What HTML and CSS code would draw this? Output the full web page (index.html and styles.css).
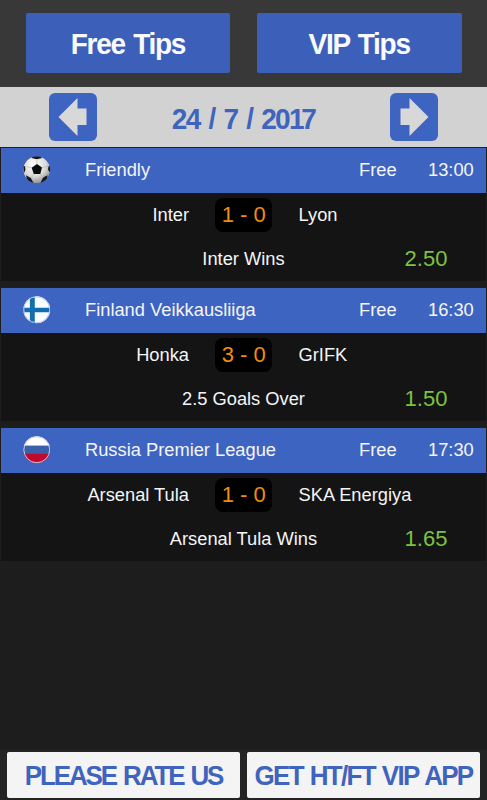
FILE: index.html
```html
<!DOCTYPE html>
<html lang="en">
<head>
<meta charset="utf-8">
<title>Betting Tips</title>
<link rel="stylesheet" href="styles.css">
</head>
<body>
<nav class="tabs">
  <button class="tab"><span class="tall">Free Tips</span></button>
  <button class="tab"><span class="tall">VIP Tips</span></button>
</nav>
<div class="datebar">
  <button class="arrow" aria-label="Previous day"><svg viewBox="0 0 48 48"><path d="M9.500 24 28.500 5V15.500H37.500V32H28.500V43Z"/></svg></button>
  <span class="date tall">24 / 7 / 20<span class="tight">1</span>7</span>
  <button class="arrow" aria-label="Next day"><svg viewBox="0 0 48 48"><path d="M38.500 24 19.500 5V15.500H10.500V32H19.500V43Z"/></svg></button>
</div>
<main class="list">
  <article class="card">
    <header class="league">
      <svg class="badge" viewBox="0 0 28 28">
        <defs>
          <radialGradient id="shade" cx=".4" cy=".3" r=".75"><stop offset="0" stop-color="#fff"/><stop offset=".6" stop-color="#d9d9d6"/><stop offset="1" stop-color="#85878a"/></radialGradient>
          <clipPath id="round"><circle cx="14" cy="14" r="13.700"/></clipPath>
        </defs>
        <g clip-path="url(#round)">
          <circle cx="14" cy="14" r="13.700" fill="url(#shade)"/>
          <path d="M14.200 8.200 19.300 11.800 17.600 18.300H11L8.800 12Z" fill="#090a0c"/>
          <path d="M8.500 2 14 3.300 19.500 2 17 0H11ZM0 10 2 10.500 2.500 14 1 17.500ZM28 10 26 10.500 25.500 14 28 17.500ZM3 19.500 8 22.500 11 28 5 27ZM25 19.500 20.500 22 17.500 28 24 27Z" fill="#15171b"/>
          <path d="M14.200 8.200 14 3M19.300 11.800 25.500 10.500M17.600 18.300 20.500 22M11 18.300 8 22.500M8.800 12 2.500 10.500" stroke="#aaa" stroke-width=".5"/>
        </g>
      </svg>
      <span class="name">Friendly</span><span class="tier">Free</span><time class="time">13:00</time>
    </header>
    <div class="match"><span class="home">Inter</span><span class="score">1 - 0</span><span class="away">Lyon</span></div>
    <div class="pick"><span class="tip">Inter Wins</span><span class="odds">2.50</span></div>
  </article>
  <article class="card">
    <header class="league">
      <svg class="badge" viewBox="0 0 28 28">
        <g clip-path="url(#round)"><path d="M0 0H28V28H0Z" fill="#fbfcff"/><path d="M7 0H12V28H7ZM0 12H28V16.500H0Z" fill="#126eae"/></g>
        <circle cx="14" cy="14" r="13.200" fill="none" stroke="#b9c9ee"/>
      </svg>
      <span class="name">Finland Veikkausliiga</span><span class="tier">Free</span><time class="time">16:30</time>
    </header>
    <div class="match"><span class="home">Honka</span><span class="score">3 - 0</span><span class="away">GrIFK</span></div>
    <div class="pick"><span class="tip">2.5 Goals Over</span><span class="odds">1.50</span></div>
  </article>
  <article class="card">
    <header class="league">
      <svg class="badge" viewBox="0 0 28 28">
        <g clip-path="url(#round)"><path d="M0 0H28V10H0Z" fill="#fff"/><path d="M0 10H28V18H0Z" fill="#3b5faa"/><path d="M0 18H28V28H0Z" fill="#c00a2c"/></g>
        <circle cx="14" cy="14" r="13.200" fill="none" stroke="#c9cff0"/>
      </svg>
      <span class="name">Russia Premier League</span><span class="tier">Free</span><time class="time">17:30</time>
    </header>
    <div class="match"><span class="home">Arsenal Tula</span><span class="score">1 - 0</span><span class="away">SKA Energiya</span></div>
    <div class="pick"><span class="tip">Arsenal Tula Wins</span><span class="odds">1.65</span></div>
  </article>
</main>
<footer class="actions">
  <button class="action rate"><span class="tall">PLEASE RATE US</span></button>
  <button class="action vip"><span class="tall">GET HT/FT VIP APP</span></button>
</footer>
</body>
</html>
```
FILE: styles.css
```css
* { box-sizing: border-box; }
body {
  margin: 0;
  height: 800px;
  display: flex;
  flex-direction: column;
  overflow: hidden;
  background: #1d1d1d;
  color: #f4f5f6;
  font: 18.3px/28px "Liberation Sans", Arial, sans-serif;
}
button { border: 0; padding: 0; font-family: inherit; white-space: nowrap; }
.tall { display: inline-block; transform: scaleY(1.05); }

.tabs {
  flex: none;
  height: 87px;
  padding: 13px 25.5px 14px 25.5px;
  display: grid;
  grid-template-columns: 1fr 1fr;
  gap: 26.5px;
  background: #383838;
}
.tab {
  border-radius: 2px;
  background: #3c60b9;
  color: #f8faff;
  font-size: 28px;
  font-weight: bold;
  letter-spacing: -1.3px;
  word-spacing: 2px;
  line-height: 56px;
  padding-top: 4px;
}

.datebar {
  flex: none;
  height: 60px;
  padding: 0 49px;
  display: flex;
  align-items: center;
  justify-content: space-between;
  background: #d2d2d2;
}
.arrow { width: 48px; height: 48px; border-radius: 6px; background: #3e64c2; }
.arrow svg { display: block; width: 48px; height: 48px; fill: #d8d8d8; }
.date {
  color: #3e64bd;
  font-size: 28px;
  font-weight: bold;
  letter-spacing: -1.7px;
  word-spacing: 2.8px;
  padding-top: 4px;
}
.tight { letter-spacing: -3.2px; }

.list {
  flex: 1;
  border-top: 1px solid #172039;
  padding: 0 1px;
}
.card { height: 133px; margin-bottom: 7px; background: #141414; }
.league {
  height: 45px;
  padding-bottom: 1px;
  display: grid;
  grid-template-columns: 84px 1fr 77px 58px;
  align-items: center;
  background: #3e64c2;
}
.badge { width: 27.5px; height: 27.5px; margin-left: 21.5px; }
.tier { padding-left: 8px; }
.time { text-align: right; padding-right: 13px; }
.name, .tier, .time { white-space: nowrap; }
.match {
  height: 44px;
  display: grid;
  grid-template-columns: 188px 109.5px 1fr;
  align-items: center;
}
.home { text-align: right; }
.score {
  justify-self: center;
  width: 57px;
  height: 34px;
  border-radius: 8px;
  background: #000;
  color: #f18d0c;
  font-size: 22px;
  line-height: 34px;
  text-align: center;
}
.pick {
  height: 44px;
  display: grid;
  grid-template-columns: 110px 265px 100px;
  align-items: center;
}
.tip { grid-column: 2; text-align: center; }
.odds { grid-column: 3; text-align: center; color: #7dc242; font-size: 22px; }

.actions {
  flex: none;
  height: 50px;
  padding: 1.5px 7px 2px;
  display: grid;
  grid-template-columns: 1fr 1fr;
  gap: 7px;
  background: #242424;
}
.action {
  height: 46.5px;
  border-radius: 2px;
  background: #f4f4f4;
  color: #3e64bd;
  font-size: 26px;
  font-weight: bold;
  line-height: 45px;
  padding-top: 2px;
}
.rate { letter-spacing: -2.1px; word-spacing: 1.8px; }
.vip { letter-spacing: -1.7px; word-spacing: 1.4px; }
```
